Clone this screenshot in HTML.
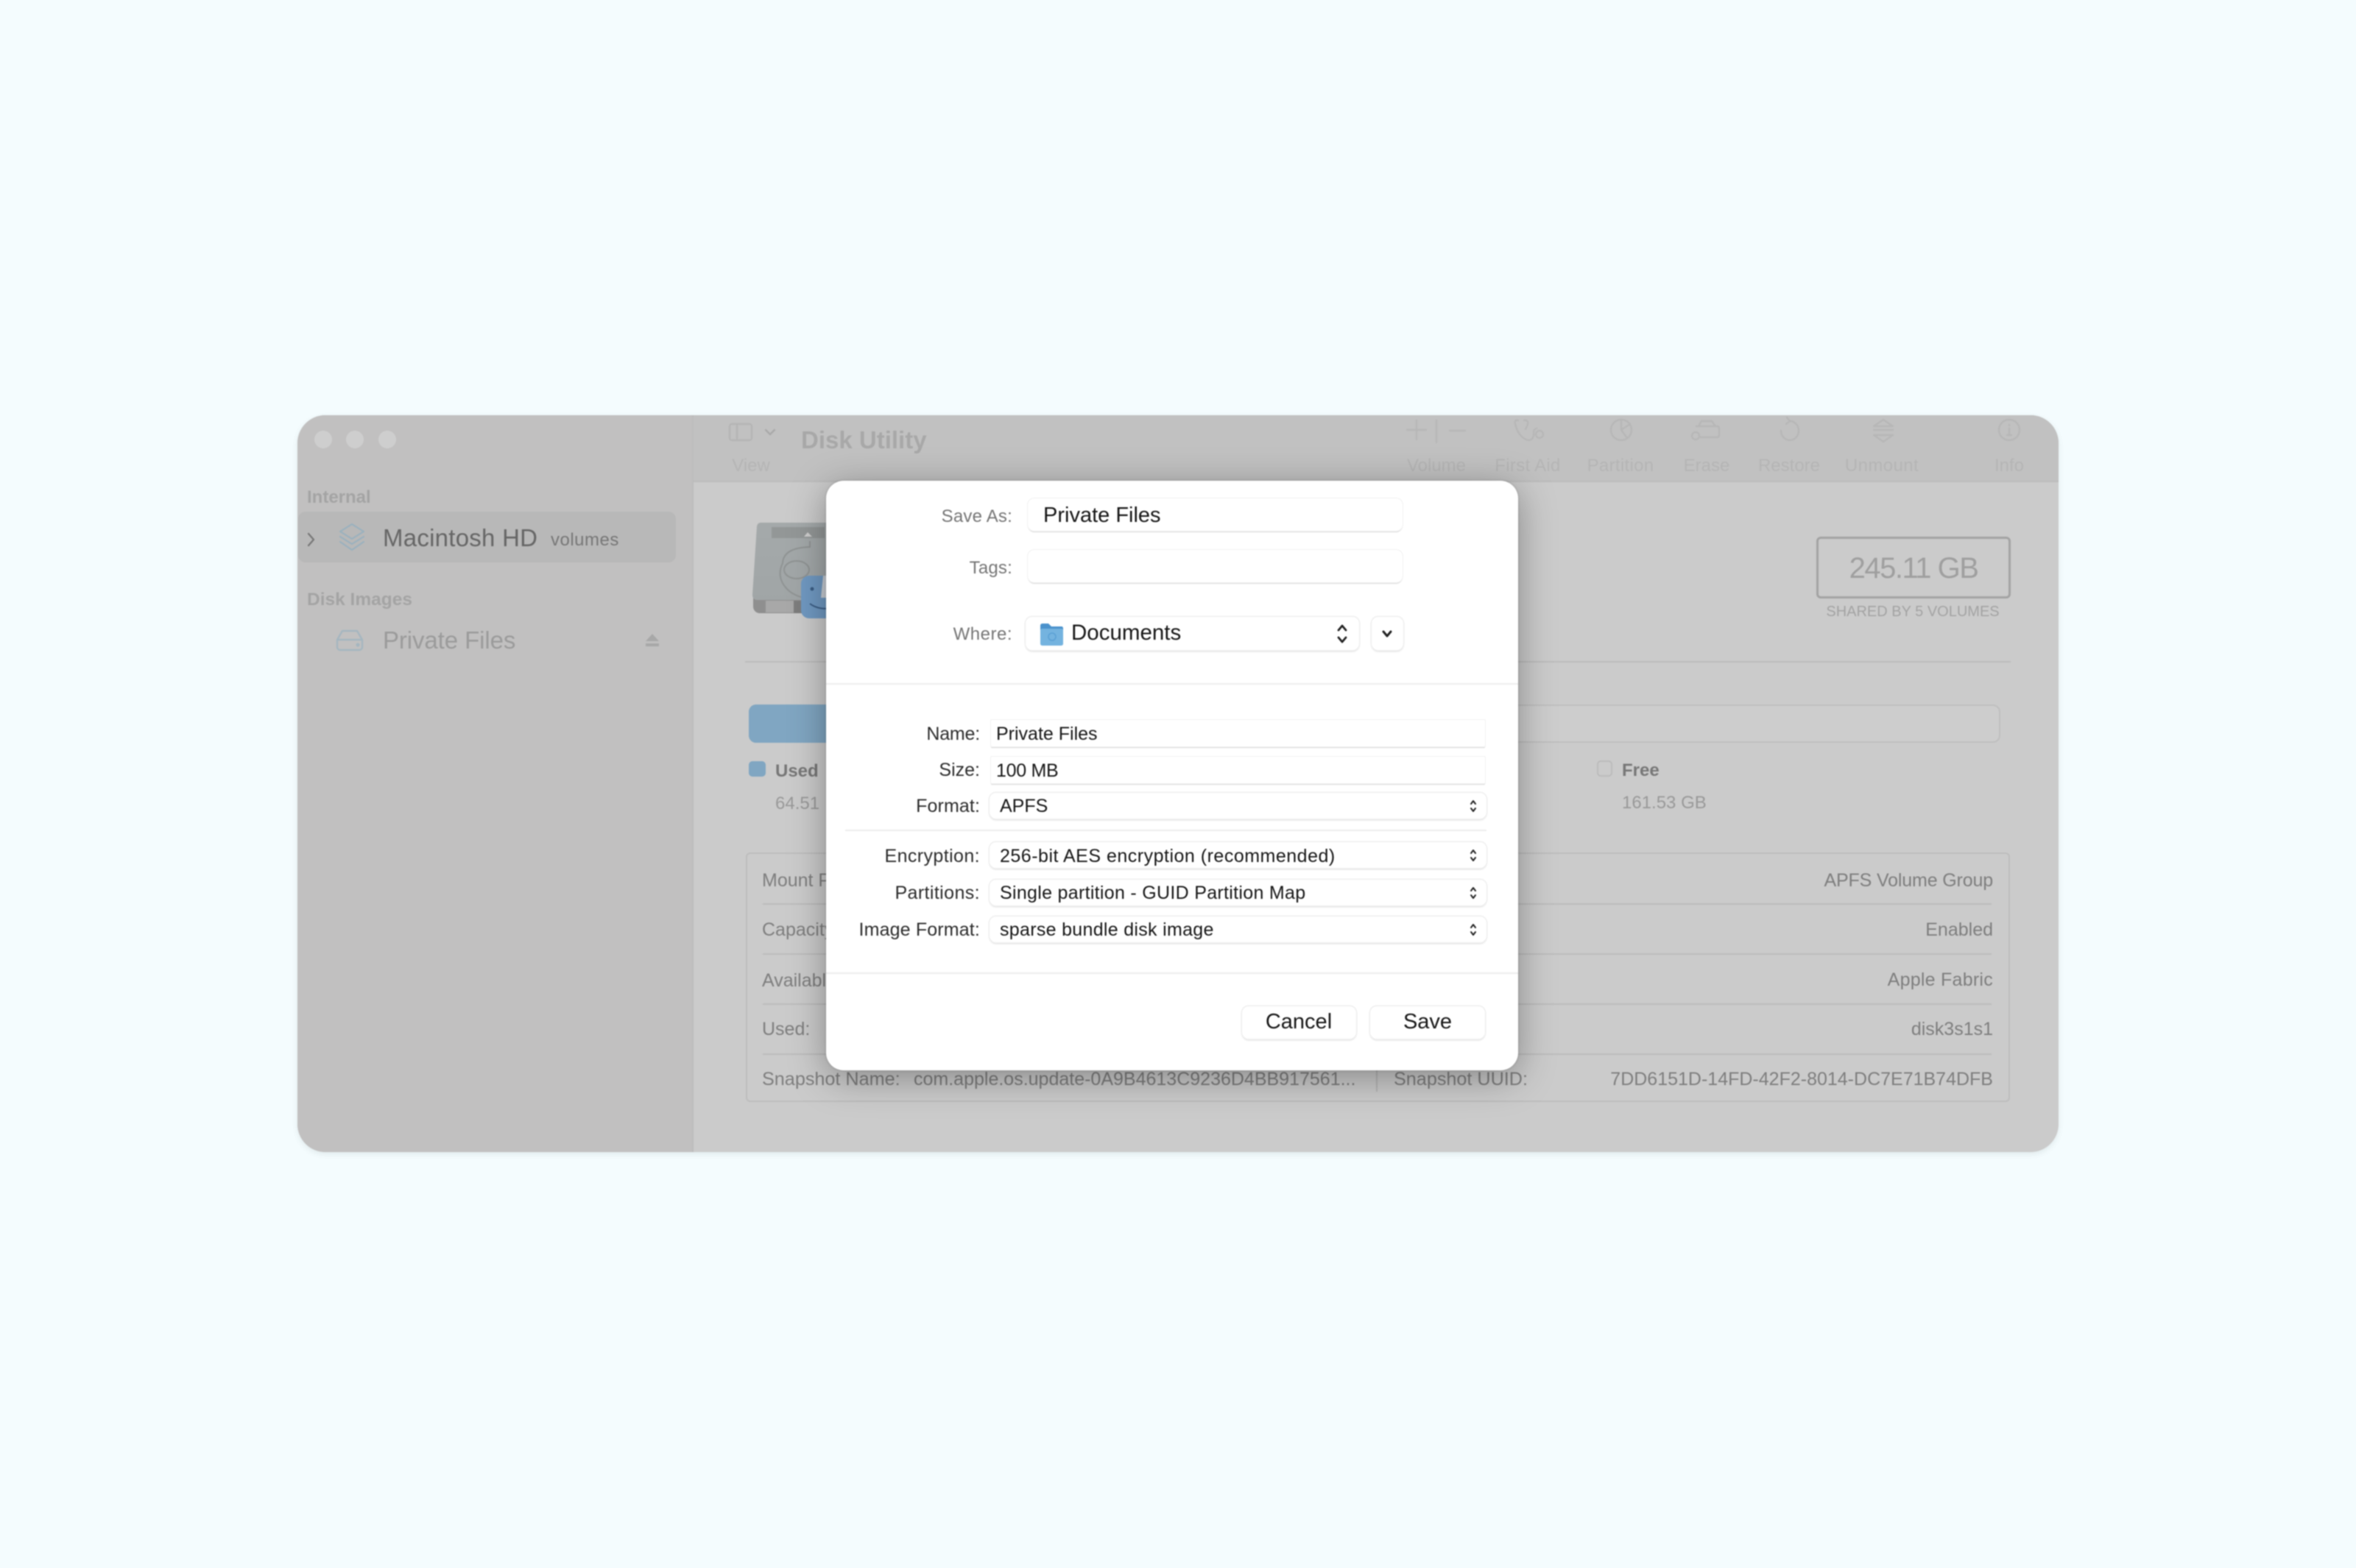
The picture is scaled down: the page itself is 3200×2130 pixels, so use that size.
<!DOCTYPE html>
<html lang="en"><head><meta charset="utf-8"><title>Disk Utility - Save As</title>
<style>
html,body{margin:0;padding:0;width:3200px;height:2130px;overflow:hidden;background:#f4fcfe}
body{position:relative;font-family:"Liberation Sans",sans-serif}
.a{position:absolute;box-sizing:border-box}
.t{position:absolute;line-height:0;white-space:nowrap;font-size:calc(var(--f)*1px);top:calc((var(--b) + 1.5 - .3465*var(--f))*1px)}
.l{left:calc(var(--x)*1px)}
.r{right:calc((3200 - var(--x))*1px);text-align:right}
.c{left:calc(var(--x)*1px);transform:translateX(-50%)}
svg{position:absolute;overflow:visible}
#win{left:404px;top:564px;width:2392px;height:1001px;border-radius:38px;background:#cbcbcb;overflow:hidden;box-shadow:0 3px 8px rgba(60,80,80,.10)}
#blur{position:absolute;left:0;top:0;width:3200px;height:2130px;filter:blur(.8px)}
.tb{color:#b5b5b5}.ic{fill:none;stroke:#b7b7b7;stroke-width:2.4;stroke-linecap:round;stroke-linejoin:round}
.g{color:#7e7e7e}.line{background:#bcbcbc;height:2px}
.fld{background:#fff;box-shadow:0 0 0 1px #f1f1f1,0 2px 1px #d6d6d6;border-radius:6px}
.pop{background:#fff;box-shadow:0 0 0 1.5px #eeeeee,0 2px 2px #d4d4d4;border-radius:9px}
.lab{color:#757575}.k{color:#161616}.d{color:#2c2c2c}.ud{fill:none;stroke:#222;stroke-width:2;stroke-linecap:round;stroke-linejoin:round}
</style></head><body>
<div id="blur">
<div class="a" id="win">
 <div class="a" style="left:0;top:0;width:536px;height:1001px;background:#c1c0c0"></div>
 <div class="a" style="left:536px;top:0;width:1856px;height:91px;background:#c1c1c1;border-bottom:2px solid #bcbcbc"></div>
 <div class="a" style="left:536px;top:0;width:2px;height:1001px;background:#bcbcbc"></div>
</div>
<!-- traffic lights -->
<div class="a" style="left:427px;top:585px;width:24px;height:24px;border-radius:50%;background:#cecece"></div>
<div class="a" style="left:470px;top:585px;width:24px;height:24px;border-radius:50%;background:#cecece"></div>
<div class="a" style="left:514px;top:585px;width:24px;height:24px;border-radius:50%;background:#cecece"></div>
<!-- sidebar -->
<div class="t l" style="--x:417;--b:682.5;--f:24;color:#a4a4a4;font-weight:700">Internal</div>
<div class="a" style="left:405px;top:695px;width:513px;height:69px;border-radius:10px;background:#b8b8b8"></div>
<svg style="left:417px;top:723px" width="12" height="20" viewBox="0 0 12 20"><path d="M2 2l7 8-7 8" fill="none" stroke="#777" stroke-width="2.3" stroke-linecap="round" stroke-linejoin="round"/></svg>
<svg style="left:460px;top:711px" width="36" height="39" viewBox="0 0 36 39" fill="none" stroke="#9ab1be" stroke-width="2.2" stroke-linejoin="round" stroke-linecap="round"><path d="M18 1L34 11 18 21 2 11Z"/><path d="M2 18L18 28 34 18"/><path d="M2 25L18 36 34 25"/></svg>
<div class="t l" style="--x:520;--b:740.5;--f:33;color:#666;letter-spacing:.25px">Macintosh HD</div>
<div class="t l" style="--x:748;--b:741;--f:24;color:#777;letter-spacing:.5px">volumes</div>
<div class="t l" style="--x:417;--b:822;--f:24.5;color:#a4a4a4;font-weight:700">Disk Images</div>
<svg style="left:456px;top:855px" width="38" height="30" viewBox="0 0 38 30" fill="none" stroke="#a5b6c0" stroke-width="2.4" stroke-linejoin="round"><path d="M9 2h20l7 12v10a4 4 0 0 1-4 4H6a4 4 0 0 1-4-4V14Z"/><path d="M2 14h34"/><circle cx="30" cy="21" r="1.4" fill="#a5b6c0"/></svg>
<div class="t l" style="--x:520;--b:879.5;--f:33;color:#9b9b9b;letter-spacing:-.1px">Private Files</div>
<svg style="left:876px;top:861px" width="20" height="18" viewBox="0 0 20 18" fill="#a8a8a8"><path d="M10 0l9 10H1Z"/><rect x="1" y="13" width="18" height="4"/></svg>
<!-- toolbar -->
<svg style="left:990px;top:575px" width="32" height="24" viewBox="0 0 32 24" fill="none" stroke="#b4b4b4" stroke-width="2.2"><rect x="1" y="1" width="30" height="22" rx="3"/><path d="M11 1v22"/></svg>
<svg style="left:1038px;top:582px" width="16" height="10" viewBox="0 0 16 10"><path d="M2 2l6 6 6-6" fill="none" stroke="#a9a9a9" stroke-width="2.4" stroke-linecap="round" stroke-linejoin="round"/></svg>
<div class="t l" style="--x:1088;--b:607.5;--f:33;color:#a8a8a8;font-weight:700">Disk Utility</div>
<div class="t c tb" style="--x:1020;--b:640;--f:24">View</div>
<svg class="ic" style="left:1900px;top:566px" width="860" height="40" viewBox="1900 566 860 40">
 <path d="M1924 571v26M1911 584h26M1951 571v30M1969 585h21"/>
 <path d="M2062 571h-3q-2 1-1 5 2 9 7 15t11 7q6 0 7-7v-4q0-4 4-5M2070 571h3q3 1 2 5-1 4-3 7"/><circle cx="2091" cy="590" r="5"/>
 <circle cx="2202" cy="584" r="14"/><path d="M2202 570v14l8 11M2202 584l12-8"/>
 <path d="M2307 579l4-7h14l5 7M2304 579h28q3 0 3 3v9q0 3-3 3h-22"/><circle cx="2303" cy="592" r="5"/>
 <path d="M2431 572a12 13 0 1 1-12 13M2431 572l-4-5M2431 572l-5 4"/>
 <path d="M2558 570l13 9h-26ZM2558 600l13-9h-26ZM2545 584h26"/>
 <circle cx="2729" cy="584" r="14"/><path d="M2729 582v9M2726 591h6M2729 577v1"/>
</svg>
<div class="t c tb" style="--x:1951;--b:640;--f:24">Volume</div>
<div class="t c tb" style="--x:2075;--b:640;--f:24;letter-spacing:.3px">First Aid</div>
<div class="t c tb" style="--x:2201;--b:640;--f:24;letter-spacing:.3px">Partition</div>
<div class="t c tb" style="--x:2318;--b:640;--f:24">Erase</div>
<div class="t c tb" style="--x:2430;--b:640;--f:24">Restore</div>
<div class="t c tb" style="--x:2556;--b:640;--f:24;letter-spacing:.4px">Unmount</div>
<div class="t c tb" style="--x:2729;--b:640;--f:24">Info</div>
<!-- drive icon -->
<svg style="left:1020px;top:706px" width="120" height="136" viewBox="1020 706 120 136">
 <defs><linearGradient id="dg" x1="0" x2="0" y1="0" y2="1"><stop offset="0" stop-color="#a4a9aa"/><stop offset="1" stop-color="#a0a5a6"/></linearGradient></defs>
 <rect x="1023" y="790" width="110" height="43" rx="9" fill="#8f8f8f"/>
 <rect x="1040" y="816" width="38" height="16" fill="#a8a8a8"/>
 <path d="M1078 816h30v17h-30Z" fill="#7d7d7d"/>
 <path d="M1033 710H1130V815H1029Q1022 815 1022 808L1028 715Q1029 710 1033 710Z" fill="url(#dg)"/>
 <rect x="1048" y="716" width="72" height="15" fill="#939797"/><path d="M1092 729l5-6 6 6Z" fill="#cfcfcf"/>
 <path d="M1100 735v8q-36 1-37 22-10 21 9 38 12 9 27 10" fill="none" stroke="#8f9393" stroke-width="2"/>
 <ellipse cx="1082" cy="774" rx="17" ry="12" fill="none" stroke="#8f9393" stroke-width="2"/>
 <rect x="1088" y="782" width="48" height="58" rx="11" fill="#7099c2"/><path d="M1118 782l-3 30h20v-30Z" fill="#c9ced4"/><circle cx="1103" cy="800" r="2.5" fill="#3b5d84"/>
 <path d="M1100 820q12 9 30 6" fill="none" stroke="#3b5d84" stroke-width="2"/>
</svg>
<div class="a line" style="left:1012px;top:898px;width:1719px"></div>
<div class="a" style="left:1017px;top:957px;width:1700px;height:52px;border-radius:10px;background:#cdcdcd;box-shadow:inset 0 0 0 2px #bfbfbf"></div>
<div class="a" style="left:1017px;top:957px;width:200px;height:52px;border-radius:10px 0 0 10px;background:#80a6c2"></div>
<div class="a" style="left:1017px;top:1034px;width:23px;height:21px;border-radius:5px;background:#80a6c2"></div>
<div class="t l" style="--x:1053;--b:1054.5;--f:24;color:#777;font-weight:700">Used</div>
<div class="t l" style="--x:1053;--b:1098.5;--f:24;color:#999">64.51</div>
<div class="a" style="left:2169px;top:1033px;width:21px;height:22px;border-radius:5px;border:2px solid #bbb"></div>
<div class="t l" style="--x:2203;--b:1054;--f:24;color:#777;font-weight:700">Free</div>
<div class="t l" style="--x:2203;--b:1097.5;--f:24;color:#999">161.53 GB</div>
<div class="a" style="left:2467px;top:729px;width:264px;height:84px;border-radius:6px;border:3px solid #a3a3a3"></div>
<div class="t c" style="--x:2599;--b:784.5;--f:40;color:#9f9f9f;letter-spacing:-1.5px">245.11 GB</div>
<div class="t c" style="--x:2598;--b:836.5;--f:20;color:#a3a3a3">SHARED BY 5 VOLUMES</div>
<!-- table -->
<div class="a" style="left:1013px;top:1158px;width:1717px;height:339px;border-radius:6px;border:2px solid #bdbdbd"></div>
<div class="a line" style="left:1036px;top:1227px;width:1669px"></div>
<div class="a line" style="left:1036px;top:1295px;width:1669px"></div>
<div class="a line" style="left:1036px;top:1363px;width:1669px"></div>
<div class="a line" style="left:1036px;top:1431px;width:1669px"></div>
<div class="a" style="left:1869px;top:1445px;width:2px;height:38px;background:#b5b5b5"></div>
<div class="t l g" style="--x:1035;--b:1203;--f:25">Mount Point:</div>
<div class="t l g" style="--x:1035;--b:1270.5;--f:25">Capacity:</div>
<div class="t l g" style="--x:1035;--b:1339;--f:25">Available:</div>
<div class="t l g" style="--x:1035;--b:1405.5;--f:25">Used:</div>
<div class="t l g" style="--x:1035;--b:1473;--f:25.2">Snapshot Name:</div>
<div class="t l g" style="--x:1241;--b:1473;--f:25">com.apple.os.update-0A9B4613C9236D4BB917561...</div>
<div class="t l g" style="--x:1893;--b:1473;--f:25.2">Snapshot UUID:</div>
<div class="t r g" style="--x:2707;--b:1203;--f:25;letter-spacing:-.15px">APFS Volume Group</div>
<div class="t r g" style="--x:2707;--b:1270.5;--f:25">Enabled</div>
<div class="t r g" style="--x:2707;--b:1338;--f:25;letter-spacing:.25px">Apple Fabric</div>
<div class="t r g" style="--x:2707;--b:1405.5;--f:25">disk3s1s1</div>
<div class="t r g" style="--x:2707;--b:1473;--f:25">7DD6151D-14FD-42F2-8014-DC7E71B74DFB</div>
<!-- dialog -->
<div class="a" style="left:1122px;top:653px;width:940px;height:801px;border-radius:24px;background:#fff;box-shadow:0 10px 50px rgba(0,0,0,.34),0 0 3px rgba(0,0,0,.18)"></div>
<div class="t r lab" style="--x:1375;--b:709;--f:24;letter-spacing:.2px">Save As:</div>
<div class="a fld" style="left:1396px;top:677px;width:509px;height:44px;border-radius:9px"></div>
<div class="t l k" style="--x:1417;--b:709;--f:29">Private Files</div>
<div class="t r lab" style="--x:1375;--b:779;--f:24;letter-spacing:.2px">Tags:</div>
<div class="a fld" style="left:1396px;top:747px;width:509px;height:44px;border-radius:9px"></div>
<div class="t r lab" style="--x:1375;--b:869;--f:24;letter-spacing:.5px">Where:</div>
<div class="a pop" style="left:1393px;top:838px;width:453px;height:45px"></div>
<svg style="left:1412px;top:846px" width="33" height="32" viewBox="0 0 33 32"><path d="M1 4q0-3 3-3h8l4 4h14q2 0 2 3v2H1Z" fill="#4a92cc"/><rect x="1" y="8" width="31" height="23" rx="2.5" fill="#74b3df"/><circle cx="17" cy="19" r="5" fill="none" stroke="#5aa0d4" stroke-width="1.5"/></svg>
<div class="t l k" style="--x:1455;--b:869;--f:29.5">Documents</div>
<svg class="ud" style="left:1815px;top:848px;stroke-width:2.8" width="16" height="26" viewBox="0 0 16 26"><path d="M3 8l5-6 5 6M3 18l5 6 5-6"/></svg>
<div class="a pop" style="left:1863px;top:838px;width:43px;height:45px"></div>
<svg class="ud" style="left:1877px;top:856px;stroke-width:3" width="14" height="10" viewBox="0 0 14 10"><path d="M2 2l5 6 5-6"/></svg>
<div class="a" style="left:1122px;top:928px;width:940px;height:2px;background:#ececec"></div>
<div class="t r d" style="--x:1331;--b:1004;--f:25;letter-spacing:-.2px">Name:</div>
<div class="a fld" style="left:1346px;top:978px;width:671px;height:36px;border-radius:1px"></div>
<div class="t l k" style="--x:1353;--b:1004;--f:25">Private Files</div>
<div class="t r d" style="--x:1331;--b:1053;--f:25">Size:</div>
<div class="a fld" style="left:1346px;top:1028px;width:671px;height:36px;border-radius:1px"></div>
<div class="t l k" style="--x:1353;--b:1054;--f:25;letter-spacing:-.3px">100 MB</div>
<div class="t r d" style="--x:1331;--b:1102.5;--f:25;letter-spacing:.1px">Format:</div>
<div class="a pop" style="left:1344px;top:1077px;width:675px;height:35px"></div>
<div class="t l k" style="--x:1358;--b:1102.5;--f:25">APFS</div>
<div class="a" style="left:1148px;top:1127px;width:871px;height:2px;background:#ececec"></div>
<div class="t r d" style="--x:1331;--b:1170;--f:25;letter-spacing:.4px">Encryption:</div>
<div class="a pop" style="left:1344px;top:1144px;width:675px;height:35px"></div>
<div class="t l k" style="--x:1358;--b:1170;--f:25;letter-spacing:.5px">256-bit AES encryption (recommended)</div>
<div class="t r d" style="--x:1331;--b:1220;--f:25;letter-spacing:.4px">Partitions:</div>
<div class="a pop" style="left:1344px;top:1195px;width:675px;height:35px"></div>
<div class="t l k" style="--x:1358;--b:1220;--f:25;letter-spacing:.3px">Single partition - GUID Partition Map</div>
<div class="t r d" style="--x:1331;--b:1270;--f:25;letter-spacing:.15px">Image Format:</div>
<div class="a pop" style="left:1344px;top:1245px;width:675px;height:35px"></div>
<div class="t l k" style="--x:1358;--b:1270;--f:25;letter-spacing:.3px">sparse bundle disk image</div>
<svg class="ud" style="left:1996px;top:1086px" width="10" height="18" viewBox="0 0 10 18"><path d="M2 6l3-4 3 4M2 12l3 4 3-4"/></svg>
<svg class="ud" style="left:1996px;top:1153px" width="10" height="18" viewBox="0 0 10 18"><path d="M2 6l3-4 3 4M2 12l3 4 3-4"/></svg>
<svg class="ud" style="left:1996px;top:1204px" width="10" height="18" viewBox="0 0 10 18"><path d="M2 6l3-4 3 4M2 12l3 4 3-4"/></svg>
<svg class="ud" style="left:1996px;top:1254px" width="10" height="18" viewBox="0 0 10 18"><path d="M2 6l3-4 3 4M2 12l3 4 3-4"/></svg>
<div class="a" style="left:1122px;top:1321px;width:940px;height:2px;background:#ececec"></div>
<div class="a pop" style="left:1687px;top:1367px;width:155px;height:44px"></div>
<div class="t c k" style="--x:1764;--b:1396.5;--f:29">Cancel</div>
<div class="a pop" style="left:1861px;top:1367px;width:156px;height:44px"></div>
<div class="t c k" style="--x:1939;--b:1396.5;--f:29">Save</div>
</div>
</body></html>
